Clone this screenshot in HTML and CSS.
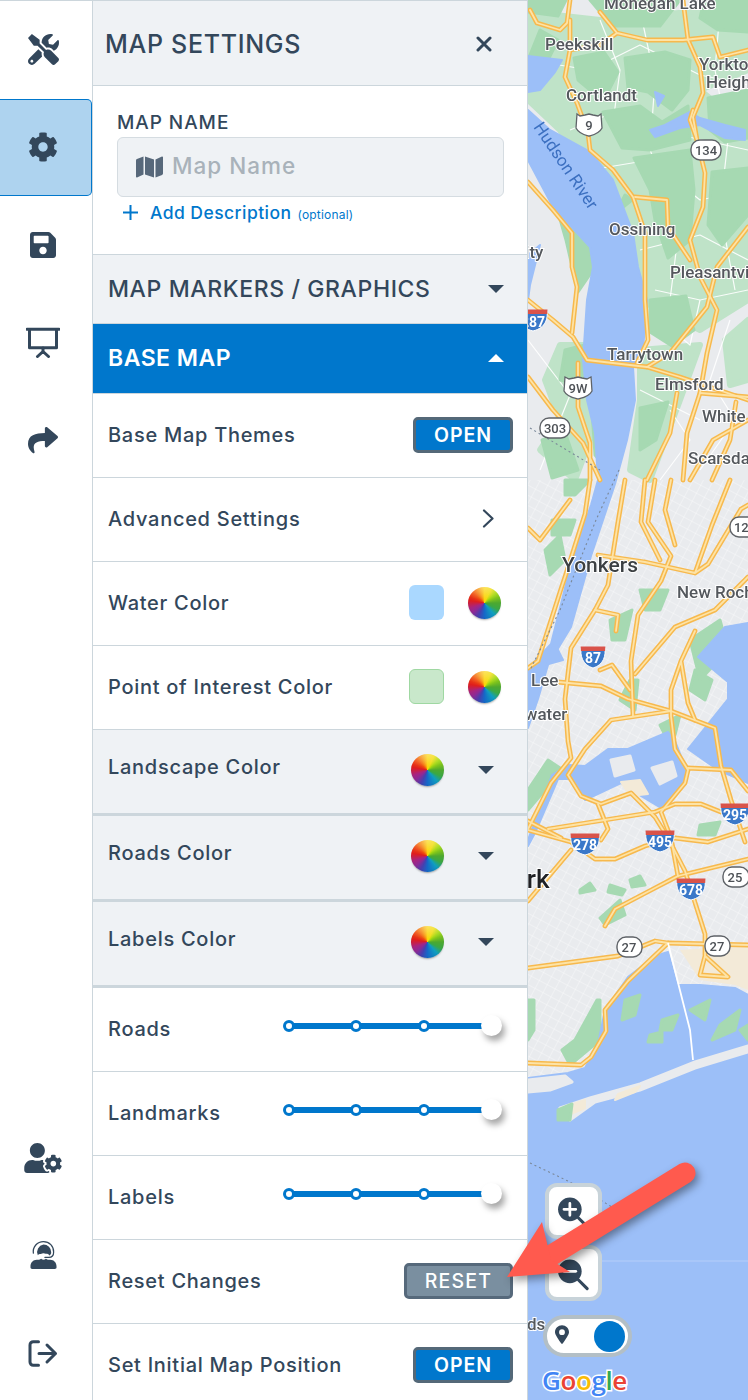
FILE: index.html
```html
<!DOCTYPE html>
<html lang="en">
<head>
<meta charset="utf-8">
<title>Map Settings</title>
<link rel="stylesheet" href="styles.css">
</head>
<body>
<div class="app">
  <nav class="rail">
    <a class="rail-item"><svg class="ic ic-tools" viewBox="0 0 512 512"><path d="M501.1 395.7L384 278.6c-23.1-23.1-57.6-27.6-85.4-13.9L192 158.1V96L64 0 0 64l96 128h62.1l106.6 106.6c-13.6 27.8-9.2 62.3 13.9 85.4l117.1 117.1c14.6 14.6 38.2 14.6 52.7 0l52.7-52.7c14.5-14.6 14.5-38.2 0-52.7zM331.7 225c28.3 0 54.9 11 74.9 31l19.4 19.4c15.8-6.9 30.8-16.5 43.8-29.5 37.1-37.1 49.7-89.3 37.9-136.7-2.2-9-13.5-12.1-20.1-5.5l-74.4 74.4-67.9-11.3L334 98.9l74.4-74.4c6.6-6.6 3.4-17.9-5.7-20.2-47.4-11.7-99.6.9-136.6 37.9-28.5 28.5-41.9 66.1-41.2 103.6l82.1 82.1c8.1-1.9 16.5-2.9 24.7-2.9zm-103.9 82l-56.7-56.7L18.7 402.8c-25 25-25 65.5 0 90.5s65.5 25 90.5 0l123.6-123.6c-7.6-19.9-9.9-41.6-5-62.7zM64 472c-13.2 0-24-10.8-24-24 0-13.3 10.7-24 24-24s24 10.7 24 24c0 13.2-10.7 24-24 24z"/></svg></a>
    <a class="rail-item is-active"><svg class="ic ic-cog" viewBox="0 0 512 512"><path d="M487.4 315.7l-42.6-24.6c4.3-23.2 4.3-47 0-70.2l42.6-24.6c4.9-2.8 7.1-8.6 5.5-14-11.1-35.6-30-67.8-54.7-94.6-3.8-4.1-10-5.1-14.8-2.3L380.8 110c-17.9-15.4-38.5-27.3-60.8-35.1V25.8c0-5.6-3.9-10.5-9.4-11.7-36.7-8.2-74.3-7.8-109.2 0-5.5 1.2-9.4 6.1-9.4 11.7V75c-22.2 7.9-42.8 19.8-60.8 35.1L88.7 85.5c-4.9-2.8-11-1.9-14.8 2.3-24.7 26.7-43.6 58.9-54.7 94.6-1.7 5.4.6 11.2 5.5 14L67.3 221c-4.3 23.2-4.3 47 0 70.2l-42.6 24.6c-4.9 2.8-7.1 8.6-5.5 14 11.1 35.6 30 67.8 54.7 94.6 3.8 4.1 10 5.1 14.8 2.3l42.6-24.6c17.9 15.4 38.5 27.3 60.8 35.1v49.2c0 5.6 3.9 10.5 9.4 11.7 36.7 8.2 74.3 7.8 109.2 0 5.5-1.2 9.4-6.1 9.4-11.7v-49.2c22.2-7.9 42.8-19.8 60.8-35.1l42.6 24.6c4.9 2.8 11 1.9 14.8-2.3 24.7-26.7 43.6-58.9 54.7-94.6 1.5-5.5-.7-11.3-5.6-14.1zM256 336c-44.1 0-80-35.9-80-80s35.9-80 80-80 80 35.9 80 80-35.9 80-80 80z"/></svg></a>
    <a class="rail-item"><svg class="ic ic-save" viewBox="0 0 448 512"><path d="M433.941 129.941l-83.882-83.882A48 48 0 0 0 316.118 32H48C21.49 32 0 53.49 0 80v352c0 26.51 21.49 48 48 48h352c26.51 0 48-21.49 48-48V163.882a48 48 0 0 0-14.059-33.941zM224 416c-35.346 0-64-28.654-64-64 0-35.346 28.654-64 64-64s64 28.654 64 64c0 35.346-28.654 64-64 64zm96-304.52V212c0 6.627-5.373 12-12 12H76c-6.627 0-12-5.373-12-12V108c0-6.627 5.373-12 12-12h228.52c3.183 0 6.235 1.264 8.485 3.515l3.48 3.48A11.996 11.996 0 0 1 320 111.48z"/></svg></a>
    <a class="rail-item"><svg class="ic ic-board" viewBox="0 0 34 31"><path class="ic-line" d="M1 2.2h32M3.5 2.2v18.6h27V2.2" stroke-width="3"/><path class="ic-line" d="M17 21v3.5M11.5 29.500l5.500-5 5.500 5" stroke-width="3"/></svg></a>
    <a class="rail-item"><svg class="ic ic-share" viewBox="0 0 512 512"><path d="M503.691 189.836L327.687 37.851C312.281 24.546 288 35.347 288 56.015v80.053C127.371 137.907 0 170.1 0 322.326c0 61.441 39.581 122.309 83.333 154.132 13.653 9.931 33.111-2.533 28.077-18.631C66.066 312.814 132.917 274.316 288 272.085V360c0 20.7 24.3 31.453 39.687 18.164l176.004-152c11.071-9.562 11.086-26.753 0-36.328z"/></svg></a>
    <a class="rail-item rail-first-bottom"><svg class="ic ic-usercog" viewBox="0 0 640 512"><path d="M610.5 373.3c2.6-14.1 2.6-28.5 0-42.6l25.8-14.9c3-1.7 4.3-5.2 3.3-8.5-6.7-21.6-18.2-41.2-33.2-57.4-2.3-2.5-6-3.1-9-1.4l-25.8 14.9c-10.9-9.3-23.4-16.5-36.9-21.3v-29.8c0-3.4-2.4-6.4-5.7-7.1-22.3-5-45-4.8-66.2 0-3.3.7-5.7 3.7-5.7 7.1v29.8c-13.5 4.8-26 12-36.9 21.3l-25.8-14.9c-2.9-1.7-6.7-1.1-9 1.4-15 16.2-26.5 35.8-33.2 57.4-1 3.3.4 6.8 3.3 8.5l25.8 14.9c-2.6 14.1-2.6 28.5 0 42.6l-25.8 14.9c-3 1.7-4.3 5.2-3.3 8.5 6.7 21.6 18.2 41.1 33.2 57.4 2.3 2.5 6 3.1 9 1.4l25.8-14.9c10.9 9.3 23.4 16.5 36.9 21.3v29.8c0 3.4 2.4 6.4 5.7 7.1 22.3 5 45 4.8 66.2 0 3.3-.7 5.7-3.7 5.7-7.1v-29.8c13.5-4.8 26-12 36.9-21.3l25.8 14.9c2.9 1.7 6.7 1.1 9-1.4 15-16.2 26.5-35.8 33.2-57.4 1-3.3-.4-6.8-3.3-8.5l-25.8-14.9zM496 400.5c-26.8 0-48.5-21.8-48.5-48.5s21.8-48.5 48.5-48.5 48.5 21.8 48.5 48.5-21.7 48.5-48.5 48.5zM224 256c70.7 0 128-57.3 128-128S294.7 0 224 0 96 57.3 96 128s57.3 128 128 128zm201.2 226.5c-2.3-1.2-4.6-2.6-6.8-3.9l-7.9 4.6c-6 3.4-12.8 5.3-19.6 5.3-10.9 0-21.4-4.6-28.9-12.6-18.3-19.8-32.3-43.9-40.2-69.6-5.5-17.7 1.9-36.4 17.9-45.7l7.9-4.6c-.1-2.6-.1-5.2 0-7.8l-7.9-4.6c-16-9.2-23.4-28-17.9-45.7.9-2.9 2.2-5.8 3.2-8.7-3.8-.3-7.5-1.2-11.4-1.2h-16.7c-22.2 10.2-46.9 16-72.9 16s-50.6-5.8-72.9-16h-16.7C60.2 288 0 348.2 0 422.4V464c0 26.5 21.5 48 48 48h352c10.1 0 19.5-3.2 27.2-8.5-1.2-3.8-2-7.7-2-11.8v-9.2z"/></svg></a>
    <a class="rail-item"><svg class="ic ic-headset" viewBox="0 0 28 32"><path class="ic-line" d="M3.500 13.500A10.500 10.500 0 0 1 14 1.500a10.500 10.500 0 0 1 10.500 11c0 3-1.800 5.300-5 5.500h-4" stroke-width="1.300"/><path d="M14 4.500a8 8 0 0 1 8 8c0 1.800-.8 2.900-2 3.500-.8-1.500-2.300-1.800-3.700-1.700-1.400-1-3.600-1-5 .2-1.300-.4-2.400 0-3.200 1.200A8 8 0 0 1 14 4.500zM7 20.500c1.700 0 3.300-.2 4.600-1.200.8.700 1.500 1 2.400 1s1.700-.3 2.500-1c1.200 1 2.800 1.200 4.500 1.200 3.700 0 6.500 3 6.500 6.700v1.300c0 1-.8 1.500-1.700 1.500H2.200c-1 0-1.700-.6-1.700-1.500v-1.300c0-3.700 2.800-6.700 6.500-6.700z"/></svg></a>
    <a class="rail-item rail-last"><svg class="ic ic-signout" viewBox="0 0 30 27"><path class="ic-line" d="M10.500 1.700H5.200A3.200 3.200 0 0 0 2 4.900v17.200a3.200 3.200 0 0 0 3.200 3.200h5.300" stroke-width="3"/><path class="ic-line" d="M11 13.500h16.500M19 5l8.500 8.500L19 22" stroke-width="3"/></svg></a>
  </nav>

  <aside class="panel">
    <header class="panel-head">
      <h1 class="panel-title">MAP SETTINGS</h1>
      <svg class="close" viewBox="0 0 16 16"><path d="M2 2l12 12M14 2L2 14"/></svg>
    </header>

    <section class="name-block">
      <label class="name-label">MAP NAME</label>
      <div class="name-input">
        <svg class="map-ic" viewBox="0 0 576 512"><path d="M0 117.660v346.320c0 11.320 11.430 19.060 21.940 14.860L160 416V32L20.120 87.950A32.006 32.006 0 0 0 0 117.660zM192 416l192 64V96L192 32v384zM554.060 33.160L416 96v384l139.880-55.950A31.996 31.996 0 0 0 576 394.340V48.020c0-11.320-11.430-19.060-21.940-14.860z"/></svg>
        <span class="placeholder">Map Name</span>
      </div>
      <div class="add-desc">
        <svg class="plus" viewBox="0 0 15 15"><path d="M7.500 0v15M0 7.500h15"/></svg>
        <span class="add-text">Add Description</span>
        <span class="optional">(optional)</span>
      </div>
    </section>

    <div class="section-head">
      <span>MAP MARKERS / GRAPHICS</span>
      <i class="caret caret-down"></i>
    </div>
    <div class="section-head is-open">
      <span>BASE MAP</span>
      <i class="caret caret-up"></i>
    </div>

    <div class="row"><span class="row-label">Base Map Themes</span><button class="btn">OPEN</button></div>
    <div class="row"><span class="row-label">Advanced Settings</span><svg class="chev" viewBox="0 0 12 19"><path d="M2 1.500l8.500 8-8.500 8"/></svg></div>
    <div class="row"><span class="row-label">Water Color</span><div class="pick"><i class="swatch swatch-water"></i><i class="wheel"></i></div></div>
    <div class="row"><span class="row-label">Point of Interest Color</span><div class="pick"><i class="swatch swatch-poi"></i><i class="wheel"></i></div></div>

    <div class="row row-sub"><span class="row-label">Landscape Color</span><div class="sub-ctl"><i class="wheel"></i><i class="caret caret-down"></i></div></div>
    <div class="row row-sub"><span class="row-label">Roads Color</span><div class="sub-ctl"><i class="wheel"></i><i class="caret caret-down"></i></div></div>
    <div class="row row-sub"><span class="row-label">Labels Color</span><div class="sub-ctl"><i class="wheel"></i><i class="caret caret-down"></i></div></div>

    <div class="row"><span class="row-label">Roads</span><div class="slider"><i class="dot"></i><i class="dot"></i><i class="dot"></i><i class="thumb"></i></div></div>
    <div class="row"><span class="row-label">Landmarks</span><div class="slider"><i class="dot"></i><i class="dot"></i><i class="dot"></i><i class="thumb"></i></div></div>
    <div class="row"><span class="row-label">Labels</span><div class="slider"><i class="dot"></i><i class="dot"></i><i class="dot"></i><i class="thumb"></i></div></div>

    <div class="row"><span class="row-label">Reset Changes</span><button class="btn btn-reset">RESET</button></div>
    <div class="row"><span class="row-label">Set Initial Map Position</span><button class="btn">OPEN</button></div>
  </aside>

  <main class="map">
    <svg class="tiles" viewBox="528 0 220 1400" width="220" height="1400">
      <defs>
        <pattern id="grid" width="9" height="9" patternUnits="userSpaceOnUse" patternTransform="rotate(28)">
          <path d="M0 0H9M0 0V9" class="minor"/>
        </pattern>
        <g id="roads">
          <path d="M570 0L567 23 560 30 537 23 530 10M570 50L565 77 577 103 588 133 590 150 613 170 633 197 645 233 645 300 648 340 637 363"/>
          <path d="M570 50L570 20M617 33L647 40 683 40 713 37 720 57 748 50M600 12L617 33 600 45 570 50"/>
          <path d="M683 0L688 40 700 67 703 93 693 117 697 140 705 173 703 207 690 240 700 277 717 310 707 353 700 393 687 433 683 480"/>
          <path d="M697 140L690 120 693 110M700 393L748 397M635 197L667 200 668 227 690 260"/>
          <path d="M748 227L717 267 707 307 670 353 647 367 587 360 573 337 553 320 528 300"/>
          <path d="M528 182L553 210 572 233 572 267 577 287 572 333M578 363L578 407 590 443 590 480M528 377L553 410 583 443 600 480"/>
          <path d="M647 367L680 377 748 400M677 393L670 433 647 480M748 420L713 440 690 480M736 402L730 440 712 480"/>
          <path d="M590 480L585 514 565 577 561 589 538 661M528 668L538 661"/>
          <path d="M625 480L618 522 608 585 595 610 571 648 565 699 568 741 571 758 551 783 528 829"/>
          <path d="M655 480L648 522 671 556 661 581 638 615 631 661 633 716M645 480L641 522 660 560M671 480L665 510 675 545M595 610L618 615 616 631"/>
          <path d="M645 562L695 573 708 564 741 509 748 505M598 555L645 562M730 480L712 525 695 573"/>
          <path d="M558 682L601 686 628 699 671 711 715 728 721 766 731 800 745 842"/>
          <path d="M671 711L611 720 585 749 568 775 581 796 601 804 631 793 655 817 668 838 685 871 705 934 705 956 728 977 700 975 705 956"/>
          <path d="M671 716L675 749 688 770 685 783 661 812 671 838 678 876M688 768L731 770 748 791M681 661L671 690 671 716M695 631L681 661 688 703 695 720"/>
          <path d="M635 674L675 627 715 610 748 577M528 821L561 838M548 829L655 812 675 804 701 804 721 812 748 806"/>
          <path d="M528 830L571 842 595 859 615 859 645 846 675 838 708 842 748 829M598 804L608 829 601 840M528 901L571 850"/>
          <path d="M605 926L615 909 655 888 678 876 715 867 748 859"/>
          <path d="M528 968L618 956 655 941 668 943 748 945"/>
          <path d="M668 943L628 981 605 1010 606 1031 591 1057 581 1065 528 1063"/>
          <path d="M600 670L612 665 630 690M528 528L540 540 570 500"/>
        </g>
        <g id="shield-i">
          <path class="i-blue" d="M-14-10H14C15-3 13 7 0 10-13 7-15-3-14-10z"/>
          <path class="i-red" d="M-14.500-11.500H14.500L14.200-7H-14.200z"/>
        </g>
      </defs>

      <rect class="land" x="528" y="0" width="220" height="1400"/>
      <rect fill="url(#grid)" x="528" y="480" width="220" height="600"/>

      <g class="green-soft">
        <path d="M528 12L600 20 690 12 748 5V70L700 90 748 130V300L700 330 640 300 600 300 600 190 560 130 528 100z"/>
        <path d="M560 345L585 345 590 440 575 480 540 450 560 420 545 380z"/>
        <path d="M640 350L700 345 680 400 665 440 650 480 630 470 640 400z"/>
        <path d="M725 340L748 320V380L730 385z"/>
      </g>
      <g class="minor-north">
        <path d="M528 60L590 70 640 45 700 75 748 85M570 130L620 110 680 135 748 150M590 170L650 160 700 200 748 190M640 250L700 235 748 260M655 290L700 300 748 290"/>
        <path d="M600 20L620 70 612 130M640 10L655 80 650 150 680 220 670 300M720 10L715 70 728 140 720 210 735 290"/>
        <path d="M528 340L570 395 540 470M600 345L610 420M640 390L700 420M660 320L690 345 700 300"/>
        <path d="M730 320L710 380 735 420 700 470M670 410L690 440 660 480"/>
      </g>
      <g class="green">
        <path d="M528 0H566L558 16 528 12zM590 0H680L660 26 612 26zM704 0H748V32L718 30 700 18z"/>
        <path d="M574 58L604 52 618 72 608 92 590 90 578 80zM625 58L665 52 690 60 688 90 672 110 648 92 628 88z"/>
        <path d="M603 112L640 106 662 122 688 106 690 140 650 150 622 148zM708 98L748 90V138L725 142 710 130z"/>
        <path d="M634 158L690 150 694 190 690 240 668 258 655 220 650 190zM712 172L748 168V215L722 245 708 225z"/>
        <path d="M558 212L590 245 593 270 578 292 566 240z"/>
        <path d="M610 225L625 195 632 200 612 216zM528 60L540 30 558 40 548 60z"/>
        <path d="M650 300L686 296 694 330 672 346 650 332zM565 350L585 345 585 385 560 380zM592 412L606 420 608 470 595 455z"/>
        <path d="M640 408L668 402 656 440 640 450zM542 440L565 432 578 470 552 478z"/>
      </g>
      <g class="green">
        <path d="M545 550L560 535 565 560 550 575zM552 520L575 520 570 535 552 535zM565 480H590L575 495 565 495zM610 620L632 610 625 640 612 640zM640 590L668 590 660 610 645 610z"/>
        <path d="M690 640L720 620 728 650 700 680zM695 670L712 680 705 700 690 690zM630 680L638 680 635 710 620 700zM660 725L680 715 675 735 665 735z"/>
        <path d="M528 790L548 760 560 768 545 790 528 810zM700 825L720 822 715 835 698 835zM630 880L640 876 645 885 632 887zM610 885L625 890 622 895 608 892zM600 918L620 900 625 915 605 925zM580 890L590 883 595 890 580 893z"/>
        <path d="M528 1000L534 1000 534 1030 528 1040zM575 1040L597 1000 600 1000 600 1040 570 1065 562 1050z"/>
      </g>
      <path class="tan" d="M680 950L748 945V990L735 985 700 980z"/>

      <g class="water">
        <path d="M528 56L562 60 555 72 540 90 528 92zM528 110L550 130 590 152 613 180 633 233 638 267 647 300 643 350 633 367 635 400 627 440 615 484 591 556 571 627 548 665 538 699 528 728V669L535 661 551 644 571 564 591 505 598 480 595 433 587 400 583 360 587 300 593 267 590 247 553 207 528 160z"/>
        <path d="M553 640L563 660 545 665zM528 255L540 245 530 285 528 300zM650 130L665 125 690 112 700 118 725 125 745 130 745 140 725 138 700 125 680 128 655 137zM655 92L664 96 658 106z"/>
        <path d="M748 623L725 627 698 657 728 682 728 699 708 724 688 749 718 770 748 783z"/>
        <path d="M585 766L608 749 628 749 668 732 675 741 685 766 685 783 661 808 641 796 621 783 585 800 571 779 558 779 535 833 528 846V840L552 775 568 765z"/>
        <path d="M528 1078L568 1073 585 1068 598 1044 605 1010 628 977 655 956 668 952 677 985 700 985 735 988 748 995V1400H528z"/>
      </g>
      <g class="isle">
        <path d="M611 760L630 756 634 770 615 776zM652 768L672 762 676 776 660 784zM560 1108L590 1098 640 1084 695 1062 748 1046V1052L695 1068 640 1090 595 1102 570 1120z"/>
        <path d="M528 1080L565 1076 572 1082 550 1090 528 1092z"/>
      </g>
      <path class="tan tan-edge" d="M621 782L640 780 648 794 630 796zM615 1100L635 1092 640 1086 618 1094zM562 1108L585 1100 585 1108 566 1116z"/>
      <g class="green">
        <path d="M558 1110L572 1104 570 1120 558 1120z"/>
        <path d="M625 1000L640 995 635 1015 622 1020zM690 1010L710 1000 705 1020zM662 1020L678 1015 672 1030 660 1030zM650 1035L662 1032 662 1042 648 1042zM720 1025L740 1010 735 1030 712 1040zM740 1030L748 1025V1040z"/>
      </g>

      <g class="roads-out"><use href="#roads"/></g>
      <g class="roads-in"><use href="#roads"/></g>
      <path class="seam" d="M668 943L690 1030 693 1060"/>
      <path class="dots" d="M530 1163L570 1182 612 1207M530 428L600 470M619 470L596 520 560 610 530 670"/>
      <path class="seamline" d="M528 1261H748"/>

      <g class="lbl">
        <text x="604" y="9">Monegan Lake</text>
        <text x="545" y="50">Peekskill</text>
        <text x="699" y="70">Yorktown</text>
        <text x="706" y="88">Heights</text>
        <text x="566" y="101">Cortlandt</text>
        <text x="609" y="235">Ossining</text>
        <text x="670" y="278">Pleasantville</text>
        <text x="607" y="360">Tarrytown</text>
        <text x="655" y="390">Elmsford</text>
        <text x="702" y="422">White Plains</text>
        <text x="688" y="464">Scarsdale</text>
        <text x="677" y="598">New Rochelle</text>
        <text x="531" y="686">Lee</text>
        <text x="487" y="720">Edgewater</text>
        <text x="514" y="258">City</text>
        <text x="498" y="1330">Sands</text>
        <text class="lbl-big" x="562" y="572">Yonkers</text>
        <text class="lbl-york" x="461" y="888">Newark</text>
        <text class="lbl-water" transform="translate(533 127) rotate(56)">Hudson River</text>
      </g>

      <g class="us-shield">
        <g transform="translate(589 125)"><path d="M-12-11L-9-9-4-10 0-11 4-10 9-9 12-11 13 3C10 9 4 10 0 11-4 10-10 9-13 3z"/><text y="5">9</text></g>
        <g transform="translate(578 388)"><path d="M-13-11L-9-9-4-10 0-11 4-10 9-9 13-11 14 3C11 9 4 10 0 11-4 10-11 9-14 3z"/><text y="5">9W</text></g>
      </g>
      <g class="oval">
        <g transform="translate(706 150)"><rect x="-15" y="-10" width="30" height="20" rx="9"/><text y="5">134</text></g>
        <g transform="translate(555 428)"><rect x="-15" y="-10" width="30" height="20" rx="9"/><text y="5">303</text></g>
        <g transform="translate(745 527)"><rect x="-15" y="-10" width="30" height="20" rx="9"/><text y="5">125</text></g>
        <g transform="translate(735 877)"><rect x="-12" y="-10" width="26" height="20" rx="9"/><text y="5">25</text></g>
        <g transform="translate(629 947)"><rect x="-12" y="-10" width="25" height="20" rx="9"/><text y="5">27</text></g>
        <g transform="translate(717 946)"><rect x="-12" y="-10" width="25" height="20" rx="9"/><text y="5">27</text></g>
      </g>
      <g class="inter">
        <g transform="translate(533 322)"><use href="#shield-i" transform="translate(0 -1)"/><text y="5">287</text></g>
        <g transform="translate(593 658)"><use href="#shield-i" transform="scale(.85 1)"/><text y="5">87</text></g>
        <g transform="translate(585 845)"><use href="#shield-i"/><text y="5">278</text></g>
        <g transform="translate(660 842)"><use href="#shield-i"/><text y="5">495</text></g>
        <g transform="translate(691 890)"><use href="#shield-i"/><text y="5">678</text></g>
        <g transform="translate(735 815)"><use href="#shield-i"/><text y="5">295</text></g>
      </g>
    </svg>

    <button class="zoom zoom-in"><svg viewBox="0 0 42 42"><circle cx="17" cy="17" r="15"/><path class="handle" d="M28 28l11 11"/><path class="sym" d="M17 9.500v15M9.500 17h15"/></svg></button>
    <button class="zoom zoom-out"><svg viewBox="0 0 42 42"><circle cx="17" cy="17" r="15"/><path class="handle" d="M28 28l11 11"/><path class="sym" d="M9.500 17h15"/></svg></button>
    <div class="toggle">
      <svg class="pin" viewBox="0 0 384 512"><path d="M172.300 501.700C27 291 0 229.300 0 192 0 86 86 0 192 0s192 86 192 192c0 37.300-27 99-172.300 309.700-9.500 13.800-29.900 13.800-39.400 0zM192 272a80 80 0 1 0 0-160 80 80 0 0 0 0 160z"/></svg>
      <i class="knob"></i>
    </div>
    <div class="google"><span class="g-b">G</span><span class="g-r">o</span><span class="g-y">o</span><span class="g-b">g</span><span class="g-g">l</span><span class="g-r">e</span></div>
  </main>

  <svg class="arrow" viewBox="0 0 210 135" width="210" height="135">
    <path d="M180 13L42 98" class="arrow-shaft"/>
    <path d="M37 62L2 117 65 112 46 100z" class="arrow-head"/>
  </svg>
</div>
</body>
</html>
```

FILE: styles.css
```css
* { box-sizing: border-box; }
html, body { margin: 0; padding: 0; }
body {
  width: 748px;
  height: 1400px;
  overflow: hidden;
  font-family: Inter, "Open Sans", "Liberation Sans", sans-serif;
  color: #33475b;
  background: #fff;
}
.app { display: flex; width: 748px; height: 1400px; position: relative; overflow: hidden; }

/* Rail */
.rail {
  flex: 0 0 93px;
  display: flex;
  flex-direction: column;
  border-right: 1px solid #ccd6dc;
  border-top: 1px solid #ccd6dc;
  background: #fff;
}
.rail-item {
  height: 97.500px;
  flex: 0 0 auto;
  display: flex;
  align-items: center;
  justify-content: center;
  padding-right: 6px;
}
.rail-item.is-active {
  background: #aed3ef;
  border: 1px solid #0077cc;
  border-left: 0;
  border-radius: 0 5px 5px 0;
}
.rail-first-bottom { margin-top: auto; }
.rail-last { margin-bottom: -2px; }
.ic { fill: #33475b; display: block; }
.ic-line { fill: none; stroke: #33475b; stroke-linecap: round; stroke-linejoin: round; }
.ic-tools { width: 31px; height: 31px; }
.ic-cog { width: 30px; height: 30px; }
.ic-save { width: 26px; height: 30px; }
.ic-board { width: 34px; height: 31px; }
.ic-share { width: 30px; height: 30px; }
.ic-usercog { width: 38px; height: 30px; }
.ic-headset { width: 27px; height: 31px; }
.ic-signout { width: 30px; height: 27px; }

/* Panel */
.panel {
  flex: 0 0 435px;
  display: flex;
  flex-direction: column;
  border-right: 1px solid #ccd6dc;
  border-top: 1px solid #ccd6dc;
  background: #fff;
}
.panel-head {
  height: 85px;
  flex: none;
  display: flex;
  align-items: center;
  justify-content: space-between;
  padding: 2px 35px 0 12px;
  background: #eff2f5;
  border-bottom: 1px solid #ccd6dc;
}
.panel-title { margin: 0; font-size: 25px; font-weight: 500; letter-spacing: .7px; color: #33475b; }
.close { width: 16px; height: 16px; fill: none; stroke: #33475b; stroke-width: 3; stroke-linecap: round; }

.name-block {
  height: 169px;
  flex: none;
  padding: 25px 23px 0 24px;
  border-bottom: 1px solid #ccd6dc;
}
.name-label { display: block; font-size: 19px; font-weight: 500; letter-spacing: .95px; line-height: 24px; height: 26px; }
.name-input {
  height: 60px;
  display: flex;
  align-items: center;
  gap: 9px;
  padding-left: 18px;
  background: #eff2f5;
  border: 1px solid #d5dce1;
  border-radius: 6px;
}
.map-ic { width: 27px; height: 24px; fill: #57687a; }
.placeholder { font-size: 22.500px; color: #a9b2ba; letter-spacing: 1px; font-weight: 500; padding-bottom: 4px; }
.add-desc { display: flex; align-items: baseline; padding: 5px 0 0 6px; color: #0077cc; }
.plus { width: 15px; height: 15px; fill: none; stroke: #0077cc; stroke-width: 2; align-self: center; margin-right: 12px; }
.add-text { font-size: 17.500px; font-weight: 500; letter-spacing: .45px; margin-right: 6px; }
.optional { font-size: 12px; letter-spacing: .2px; }

.section-head {
  flex: none;
  height: 69px;
  display: flex;
  align-items: center;
  justify-content: space-between;
  padding: 0 23px 0 15px;
  background: #eff2f5;
  border-bottom: 1px solid #ccd6dc;
  font-size: 23px;
  font-weight: 500;
  letter-spacing: .62px;
}
.section-head.is-open { height: 70px; padding-bottom: 2px; background: #0077cc; color: #fff; font-weight: 600; letter-spacing: .5px; }
.caret { display: block; width: 0; height: 0; border-left: 8px solid transparent; border-right: 8px solid transparent; }
.caret-down { border-top: 8px solid #33475b; border-bottom: 0; }
.caret-up { border-bottom: 8px solid #fff; border-top: 0; }

.row {
  flex: none;
  height: 84px;
  display: flex;
  align-items: center;
  justify-content: space-between;
  padding: 0 14px 2px 15px;
  border-bottom: 1px solid #ccd6dc;
}
.row-label { font-size: 20px; font-weight: 500; letter-spacing: .72px; color: #33475b; }
.btn {
  width: 100px;
  height: 36px;
  padding: 0;
  font-family: inherit;
  font-size: 19.500px;
  font-weight: 600;
  letter-spacing: .9px;
  color: #fff;
  background: #0077cc;
  border: 3px solid #546878;
  border-radius: 5px;
}
.btn-reset { width: 109px; background: #7a8fa0; border-color: #56697b; font-weight: 500; letter-spacing: 1.2px; }
.chev { width: 12px; height: 19px; fill: none; stroke: #33475b; stroke-width: 2.200; stroke-linecap: round; stroke-linejoin: round; margin-right: 19px; }

.pick { display: flex; align-items: center; gap: 24px; margin-right: 12px; }
.swatch { display: block; width: 35px; height: 35px; border-radius: 6px; }
.swatch-water { background: #aad8ff; }
.swatch-poi { background: #c9e8cb; border: 1px solid #9fd8a2; }
.wheel {
  display: block;
  width: 33px;
  height: 32px;
  border-radius: 50%;
  background:
    radial-gradient(ellipse 70% 40% at 50% 0, rgba(255,255,255,.35), rgba(255,255,255,0) 100%),
    radial-gradient(circle at 50% 45%, rgba(0,0,0,0) 62%, rgba(0,0,0,.16) 100%),
    conic-gradient(#fbd40a 0deg, #f2dc0a 25deg, #a3d80f 50deg, #4da82f 90deg, #3aa845 115deg, #0f9ec0 140deg, #1568c8 180deg, #4540b0 205deg, #8c2a96 230deg, #a8247f 250deg, #df1d1d 280deg, #f0500f 310deg, #f6900e 335deg, #fbd40a 360deg);
  box-shadow: 0 2px 2px -1px rgba(0,0,0,.35);
}

.row-sub { height: 86px; background: #eff2f5; border-bottom: 3px solid #ccd6dc; padding-bottom: 4px; }
.row-sub .row-label { padding-bottom: 6px; }
.sub-ctl { display: flex; align-items: center; gap: 34px; margin-right: 19px; }

.slider {
  position: relative;
  display: flex;
  align-items: center;
  gap: 55.500px;
  margin: 0 11px 5px 0;
}
.slider::before {
  content: "";
  position: absolute;
  left: 6px;
  right: 11px;
  top: 50%;
  height: 6px;
  margin-top: -3px;
  background: #0077cc;
}
.dot {
  position: relative;
  display: block;
  width: 12px;
  height: 12px;
  background: #fff;
  border: 3px solid #0077cc;
  border-radius: 50%;
}
.thumb {
  position: relative;
  display: block;
  width: 21px;
  height: 21px;
  margin: -2px 0 0 -4px;
  background: #fff;
  border-radius: 50%;
  box-shadow: 3px 5px 6px rgba(0,0,0,.35);
}

/* Map */
.map { position: relative; flex: 0 0 220px; height: 1400px; overflow: hidden; background: #9cbff8; }
.tiles { display: block; filter: blur(.6px); }
.land { fill: #e9ebee; }
.minor { fill: none; stroke: #fff; stroke-width: .9; opacity: .7; }
.minor-north path { fill: none; stroke: #fff; stroke-width: 1.200; opacity: .9; stroke-linejoin: round; }
.green-soft path { fill: #bfe3c8; stroke: #bfe3c8; stroke-width: 6; stroke-linejoin: round; }
.green path { fill: #a6d9b2; stroke: #a6d9b2; stroke-width: 3; stroke-linejoin: round; }
.tan { fill: #f3ead8; }
.tan-edge { stroke: #f3ead8; stroke-width: 2; stroke-linejoin: round; }
.water path { fill: #9cbff8; stroke: #9cbff8; stroke-width: 2; stroke-linejoin: round; }
.isle path { fill: #e9ebee; stroke: #e9ebee; stroke-width: 3; stroke-linejoin: round; }
.roads-out { fill: none; stroke: #f7b94d; stroke-width: 4.800; stroke-linejoin: round; stroke-linecap: round; }
.roads-in { fill: none; stroke: #fde3a6; stroke-width: 1.800; stroke-linejoin: round; stroke-linecap: round; }
.seam { fill: none; stroke: #fff; stroke-width: 1.800; }
.dots { fill: none; stroke: #7a8899; stroke-width: 1.100; stroke-dasharray: 2 3; }
.seamline { fill: none; stroke: #b5cefa; stroke-width: 1; }
.lbl text {
  font-family: Roboto, sans-serif;
  font-size: 17px;
  font-weight: 500;
  fill: #54585d;
  stroke: #fff;
  stroke-width: 2px;
  paint-order: stroke;
}
.lbl .lbl-big { font-size: 21px; fill: #3c4043; }
.lbl .lbl-york { font-size: 26px; fill: #202124; }
.lbl .lbl-water { font-size: 17px; fill: #3b6fc0; stroke: none; font-weight: 400; }
.us-shield path { fill: #fff; stroke: #5f6368; stroke-width: 1.300; }
.us-shield text, .oval text {
  font-family: Roboto, sans-serif;
  font-size: 13px;
  font-weight: 500;
  fill: #4d5156;
  text-anchor: middle;
}
.oval rect { fill: #fff; stroke: #5f6368; stroke-width: 1.400; }
.i-blue { fill: #3a78c9; stroke: #fff; stroke-width: 1; }
.i-red { fill: #d9534a; }
.inter text {
  font-family: Roboto, sans-serif;
  font-size: 14px;
  font-weight: 700;
  fill: #fff;
  text-anchor: middle;
}

.zoom {
  position: absolute;
  left: 17px;
  width: 57px;
  height: 56px;
  padding: 9px 8px 6px 7px;
  background: #fff;
  border: 4px solid #c8d3d9;
  border-radius: 12px;
}
.zoom svg { display: block; width: 100%; height: 100%; overflow: visible; }
.zoom circle { fill: #33475b; }
.zoom .handle { fill: none; stroke: #33475b; stroke-width: 4; stroke-linecap: round; }
.zoom .sym { fill: none; stroke: #fff; stroke-width: 3.500; stroke-linecap: round; }
.zoom-in { top: 1183px; }
.zoom-out { top: 1245px; }
.toggle {
  position: absolute;
  left: 15px;
  top: 1315px;
  width: 89px;
  height: 42px;
  display: flex;
  align-items: center;
  justify-content: space-between;
  padding: 0 3px 0 8px;
  background: #fff;
  border: 4px solid #b3bfc6;
  border-radius: 21px;
}
.pin { width: 14px; height: 19px; fill: #33475b; margin-bottom: 4px; }
.knob { display: block; width: 31px; height: 31px; background: #0077cc; border-radius: 50%; }
.google {
  position: absolute;
  left: 14px;
  top: 1362px;
  font-family: "Open Sans", sans-serif;
  font-size: 26px;
  line-height: 36px;
  font-weight: 600;
  letter-spacing: -.4px;
  -webkit-text-stroke: 3px #fff;
  paint-order: stroke fill;
}
.g-b { color: #4285f4; }
.g-r { color: #ea4335; }
.g-y { color: #fbbc05; }
.g-g { color: #34a853; }

/* Annotation arrow */
.arrow {
  position: absolute;
  left: 505px;
  top: 1160px;
  overflow: visible;
  filter: drop-shadow(3px 4px 4px rgba(0,0,0,.4));
}
.arrow-shaft { fill: none; stroke: #ff5a4e; stroke-width: 21; stroke-linecap: round; }
.arrow-head { fill: #ff5a4e; }
```
